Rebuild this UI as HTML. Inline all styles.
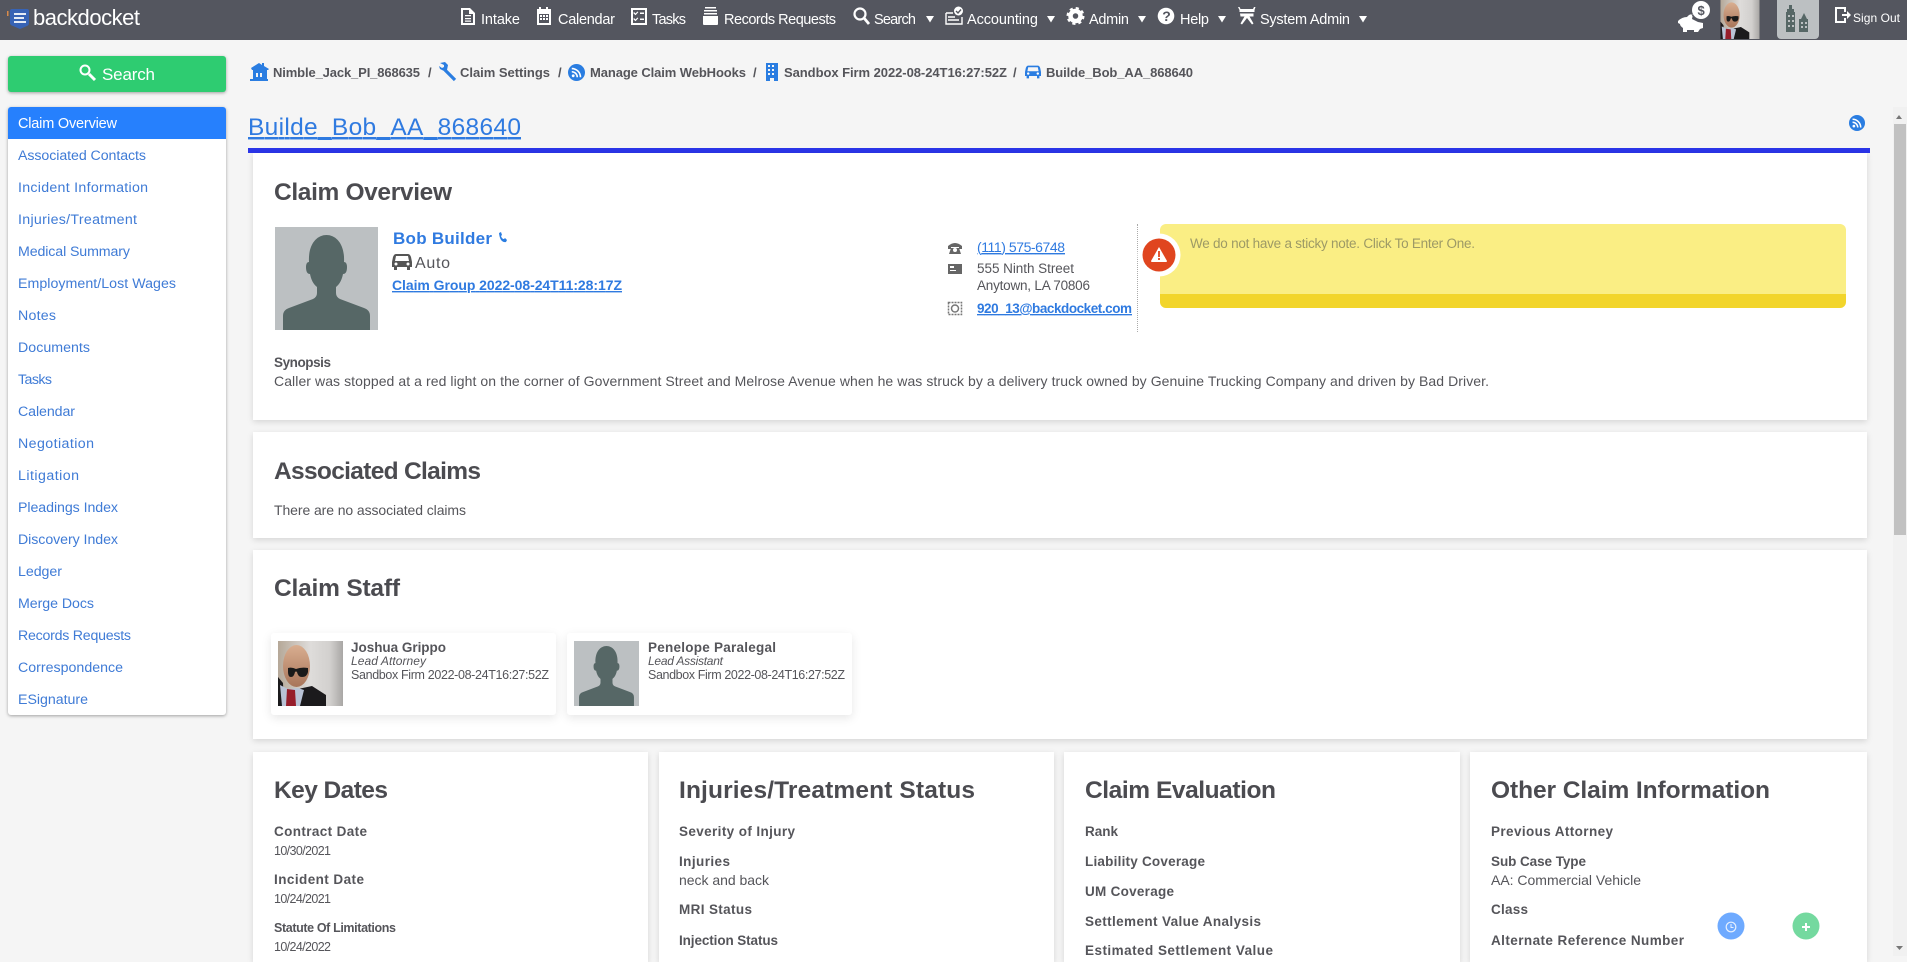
<!DOCTYPE html>
<html lang="en"><head><meta charset="utf-8"><title>Builde_Bob_AA_868640</title>
<style>
html,body{margin:0;padding:0;width:1907px;height:956px;overflow:hidden;background:#f5f5f5}
.b{position:absolute;box-sizing:border-box}
.card{background:#fff;box-shadow:0 2px 6px rgba(0,0,0,.13)}
svg#o{position:absolute;left:0;top:0}
text{font-family:"Liberation Sans",sans-serif;fill:#55555a;font-size:14px;white-space:pre}
.h{font-size:24.500px;font-weight:700;fill:#4b4b50}
.s{font-weight:700;font-size:13.500px}
.v{font-size:12.500px}
.n{fill:#fff;font-size:14.500px}
.m{fill:#3f7bd6;font-size:14.200px}
.l{fill:#2f7ae0}
.u{text-decoration:underline}
.bc{font-weight:700;font-size:13px;fill:#55555a}
.ic{fill:#fff}
</style></head><body>
<div class="b" style="left:0;top:0;width:1907px;height:40px;background:#54565f"></div>
<div class="b" style="left:1777px;top:0;width:42px;height:39px;background:#bcc0c2;border-radius:0 0 4px 4px"></div>
<div class="b" style="left:8px;top:56px;width:218px;height:36px;background:#2ecc71;border-radius:3px;box-shadow:0 1px 3px rgba(0,0,0,.35)"></div>
<div class="b" style="left:8px;top:107px;width:218px;height:608px;background:#fff;border-radius:3px;box-shadow:0 1px 3px rgba(0,0,0,.35)"></div>
<div class="b" style="left:8px;top:107px;width:218px;height:32px;background:#2680fd;border-radius:3px 3px 0 0"></div>
<div class="b" style="left:248px;top:148px;width:1622px;height:5px;background:#2b35e8"></div>
<div class="b card" style="left:253px;top:153px;width:1614px;height:267px"></div>
<div class="b card" style="left:253px;top:432px;width:1614px;height:106px"></div>
<div class="b card" style="left:253px;top:550px;width:1614px;height:189px"></div>
<div class="b card" style="left:253px;top:752px;width:395px;height:210px"></div>
<div class="b card" style="left:659px;top:752px;width:395px;height:210px"></div>
<div class="b card" style="left:1064px;top:752px;width:396px;height:210px"></div>
<div class="b card" style="left:1470px;top:752px;width:397px;height:210px"></div>
<div class="b" style="left:1160px;top:224px;width:686px;height:84px;background:#faee84;border-radius:6px;border-bottom:14px solid #f2d52b"></div>
<div class="b" style="left:1137px;top:224px;width:0;height:108px;border-left:1px dotted #aaa"></div>
<div class="b card" style="left:271px;top:633px;width:285px;height:82px;border-radius:3px;box-shadow:0 3px 10px rgba(0,0,0,.10)"></div>
<div class="b card" style="left:567px;top:633px;width:285px;height:82px;border-radius:3px;box-shadow:0 3px 10px rgba(0,0,0,.10)"></div>
<div class="b" style="left:1893px;top:107px;width:14px;height:849px;background:#f1f1f1"></div>
<div class="b" style="left:1894px;top:124px;width:12px;height:411px;background:#c1c1c1"></div>

<svg id="o" width="1907" height="956" viewBox="0 0 1907 956" xmlns="http://www.w3.org/2000/svg">
<defs>
<symbol id="sil" viewBox="0 0 103 103"><rect width="103" height="103" fill="#bcc0c2"/><path fill="#566766" d="M8 103V89q0-6 6-8l24-9q4-2 4-6v-6c-4-3-6-8-7-13-3 0-4-3-4-7 0-3 1-5 3-5-1-18 8-27 17.500-27S70 17 69 35c2 0 3 2 3 5 0 4-1 7-4 7-1 5-3 10-7 13v6q0 4 4 6l24 9q6 2 6 8v14z"/></symbol>
<linearGradient id="bgp" x1="0" x2="1" y1="0" y2="0"><stop offset="0" stop-color="#b5a898"/><stop offset=".5" stop-color="#dedcda"/><stop offset=".8" stop-color="#d2d0ce"/><stop offset="1" stop-color="#a9a7a5"/></linearGradient>
<linearGradient id="hd" x1="0" x2="0" y1="0" y2="1"><stop offset="0" stop-color="#d9ae90"/><stop offset="1" stop-color="#a8755a"/></linearGradient>
<symbol id="pho" viewBox="0 0 65 65"><rect width="65" height="65" fill="url(#bgp)"/>
<path fill="#1b1a1c" d="M0 36l5 6 1 23H0zM20 48l14-3 14 9v11H22z"/>
<path fill="#b9c3d6" d="M2 44l8 4 10-1 6 2-4 16H4z"/>
<ellipse cx="18.500" cy="25" rx="13.500" ry="21" fill="url(#hd)"/>
<path fill="#971e2b" d="M9 48l8 1 1 16H8z"/>
<path fill="#1a1a1a" d="M10 27q4-1 8 1 5-2 12-1l0 4q-1 5-6 5-4 0-5-5-1-1-2 0-1 5-4 5-3 0-3-5z"/></symbol>
<symbol id="car" viewBox="0 0 20 18"><path d="M4 1h12q2 0 3 3l1 5v5h-2v3h-3v-3H5v3H2v-3H0V9l1-5q1-3 3-3zM4 3 3 8h14l-1-5z"/><circle cx="4" cy="11" r="1.500" fill="#fff"/><circle cx="16" cy="11" r="1.500" fill="#fff"/></symbol>
<symbol id="rss" viewBox="0 0 18 18"><circle cx="9" cy="9" r="9" fill="#2a7de1"/><circle cx="5.500" cy="12.500" r="1.500" fill="#fff"/><path fill="none" stroke="#fff" stroke-width="1.700" d="M4 8.200a5.800 5.800 0 0 1 5.800 5.800M4 4.800a9.200 9.200 0 0 1 9.200 9.200"/></symbol>
</defs>

<!-- Logo -->
<rect x="7" y="11" width="1.500" height="5" fill="#d98a4a"/>
<path fill="#3763b5" d="M12 9h15q2 0 2 2v12q0 2-2 3l-7 3-7-3q-3-1-3-3V11q0-2 2-2z"/>
<path stroke="#fff" stroke-width="1.800" d="M14 14h12M14 18h10M14 22h12"/>
<text x="33" y="25" textLength="107" style="font-size:22px;fill:#fff">backdocket</text>

<!-- Nav icons -->
<g class="ic">
<path fill-rule="evenodd" d="M461 8h9l5 5v12h-14zM463 10v13h10V14h-4v-4z"/><path d="M465 15h6v1.200h-6zM465 18h6v1.200h-6zM465 20.500h6v1.200h-6z"/>
<path fill-rule="evenodd" d="M537 9h2V7h2v2h5V7h2v2h3v16h-14zM539 14v9h10v-9z"/><path d="M540 15h2v2h-2zM543 15h2v2h-2zM546 15h2v2h-2zM540 18h2v2h-2zM543 18h2v2h-2zM546 18h2v2h-2z"/>
<path fill-rule="evenodd" d="M631 8h16v17h-16zM633 10v13h12V10z"/><path d="M634 12l1.500 1.500 2-2 .8.800-2.800 3-2.200-2.200zM640 12.500h4v1.500h-4zM634 18l1.500 1.500 2-2 .8.800-2.800 3-2.200-2.200zM640 18.500h4v1.500h-4z"/>
<path d="M705 7h11v1.500h-11zM704 10h13v1.500h-13zM704 13h13v1.500h-13zM703 16h15v8q0 1-1 1h-13q-1 0-1-1z"/>
<circle cx="860" cy="14" r="5.500" fill="none" stroke="#fff" stroke-width="2.200"/><path fill="none" stroke="#fff" stroke-width="2.800" d="M864 18l5 6"/>
<path fill="none" stroke="#fff" stroke-width="1.400" d="M946 13h7M946 13v11h16v-7M948 17h7M948 20h11"/><circle cx="958.500" cy="11" r="4.500"/><path fill="none" stroke="#54565f" stroke-width="1.400" d="M956 11l2 2 3-3.500"/>
<circle cx="1075.500" cy="16" r="5" fill="none" stroke="#fff" stroke-width="4.500"/><circle cx="1075.500" cy="16" r="7.500" fill="none" stroke="#fff" stroke-width="3" stroke-dasharray="3 2.890"/>
<circle cx="1166" cy="16" r="8.300"/><text x="1162.200" y="21" style="font-size:14px;font-weight:700;fill:#54565f">?</text>
<path d="M1238 7h1.500l1 2h12.500l1-2h1.500l-1 3v2h-15v-2zM1240 13.500h13.500v3h-4l4 7-1.500 1-5-6.500-5 6.500-1.500-1 4-7h-4z"/>
</g>
<!-- Nav text -->
<text class="n" x="481" y="24" textLength="39">Intake</text>
<text class="n" x="558" y="24" textLength="57">Calendar</text>
<text class="n" x="652" y="24" textLength="34">Tasks</text>
<text class="n" x="724" y="24" textLength="112">Records Requests</text>
<text class="n" x="874" y="24" textLength="42">Search</text>
<text class="n" x="967" y="24" textLength="71">Accounting</text>
<text class="n" x="1089" y="24" textLength="40">Admin</text>
<text class="n" x="1180" y="24" textLength="29">Help</text>
<text class="n" x="1260" y="24" textLength="90">System Admin</text>
<path class="ic" d="M926 16h8l-4 6.500zM1047 16h8l-4 6.500zM1138 16h8l-4 6.500zM1218 16h8l-4 6.500zM1359 16h8l-4 6.500z"/>

<!-- Top right -->
<path class="ic" d="M1678 21q4-4 9-4 2-3 6-3l-1 5 6 3 5 1v5l-3 1-2 3v0h-4v-2h-7v2h-4v-4q-3-2-3-4l-2-1z"/>
<circle cx="1701" cy="10" r="9" fill="#fff"/><circle cx="1701" cy="10" r="10" fill="none" stroke="#54565f" stroke-width="1"/><text x="1697.500" y="15" style="font-size:13px;font-weight:700;fill:#54565f">$</text>
<use href="#pho" x="1719" y="0" width="42" height="39"/>
<g fill="#566766"><path d="M1787 9h2V5h3v4h2v3h1v20h-9V12h1zM1801 19l3-6 3 6h1v13h-9V19z"/></g>
<g fill="#bcc0c2"><path d="M1788 15h2v2h-2zM1792 15h2v2h-2zM1788 20h2v2h-2zM1792 20h2v2h-2zM1788 25h2v2h-2zM1792 25h2v2h-2zM1801 22h2v2h-2zM1805 22h2v2h-2zM1801 26h2v2h-2zM1805 26h2v2h-2z"/></g>
<path class="ic" fill-rule="evenodd" d="M1835 7h11v5h-2V9h-7v12h7v-3h2v5h-11zM1842 14h5v-3l4 4-4 4v-3h-5z"/>
<text x="1853" y="22" textLength="47" style="font-size:12px;fill:#fff">Sign Out</text>

<!-- Sidebar -->
<circle cx="85" cy="70" r="4.500" fill="none" stroke="#fff" stroke-width="2"/><path fill="none" stroke="#fff" stroke-width="3" d="M89 74l6 6"/>
<text x="102" y="80" textLength="53" style="font-size:17px;fill:#fff">Search</text>
<text class="n" x="18" y="128" textLength="99">Claim Overview</text>
<text class="m" x="18" y="160" textLength="128">Associated Contacts</text>
<text class="m" x="18" y="192" textLength="130">Incident Information</text>
<text class="m" x="18" y="224" textLength="119">Injuries/Treatment</text>
<text class="m" x="18" y="256" textLength="112">Medical Summary</text>
<text class="m" x="18" y="288" textLength="158">Employment/Lost Wages</text>
<text class="m" x="18" y="320" textLength="38">Notes</text>
<text class="m" x="18" y="352" textLength="72">Documents</text>
<text class="m" x="18" y="384" textLength="34">Tasks</text>
<text class="m" x="18" y="416" textLength="57">Calendar</text>
<text class="m" x="18" y="448" textLength="76">Negotiation</text>
<text class="m" x="18" y="480" textLength="61">Litigation</text>
<text class="m" x="18" y="512" textLength="100">Pleadings Index</text>
<text class="m" x="18" y="544" textLength="100">Discovery Index</text>
<text class="m" x="18" y="576" textLength="44">Ledger</text>
<text class="m" x="18" y="608" textLength="76">Merge Docs</text>
<text class="m" x="18" y="640" textLength="113">Records Requests</text>
<text class="m" x="18" y="672" textLength="105">Correspondence</text>
<text class="m" x="18" y="704" textLength="70">ESignature</text>

<!-- Breadcrumb -->
<g transform="translate(0,3)"><path fill="#2a7de1" d="M251 65l8-5 3 2v-2h2v3l5 3-1 1h-1v10h-14V67h-1zM256 70v4h2v-4zM260 70v4h2v-4z M250 76h18v2h-18z"/></g>
<text class="bc" x="273" y="77" textLength="147">Nimble_Jack_PI_868635</text>
<text class="bc" x="428" y="77">/</text>
<g transform="translate(0,3)"><path fill="none" stroke="#2a7de1" stroke-width="3.200" d="M445 67l10 10"/><path fill="#2a7de1" d="M440 60l5-1 3 3-1 5-3 1-4-2-1-3 3 2 2-1 0-2z"/></g>
<text class="bc" x="460" y="77" textLength="90">Claim Settings</text>
<text class="bc" x="558" y="77">/</text>
<use href="#rss" x="568" y="64" width="17" height="17"/>
<text class="bc" x="590" y="77" textLength="156">Manage Claim WebHooks</text>
<text class="bc" x="753" y="77">/</text>
<path fill="#2a7de1" fill-rule="evenodd" d="M766 63h12v18h-4v-3h-4v3h-4z"/><path fill="#f5f5f5" d="M768 65h2v2h-2zM772 65h2v2h-2zM768 69h2v2h-2zM772 69h2v2h-2zM768 73h2v2h-2zM772 73h2v2h-2z"/>
<text class="bc" x="784" y="77" textLength="223">Sandbox Firm 2022-08-24T16:27:52Z</text>
<text class="bc" x="1013" y="77">/</text>
<use href="#car" x="1025" y="64" width="16" height="16" fill="#2a7de1"/>
<text class="bc" x="1046" y="77" textLength="147">Builde_Bob_AA_868640</text>

<!-- Title -->
<text class="l u" x="248" y="135" textLength="273" style="font-size:24.500px">Builde_Bob_AA_868640</text>
<use href="#rss" x="1849" y="115" width="16" height="16"/>

<!-- Claim Overview -->
<text class="h" x="274" y="200" textLength="178">Claim Overview</text>
<use href="#sil" x="275" y="227" width="103" height="103"/>
<text class="l" x="393" y="244" textLength="99" style="font-size:17px;font-weight:700">Bob Builder</text>
<path fill="#2a7de1" d="M499 233l2-1 1 3-1 1q1 3 3 3l1-1 2 2-1 2q-6 1-7-9z"/>
<use href="#car" x="392" y="253" width="20" height="18" fill="#555"/>
<text x="415" y="268" textLength="35" style="font-size:16px">Auto</text>
<text class="l u" x="392" y="290" textLength="230" style="font-weight:700;font-size:14px">Claim Group 2022-08-24T11:28:17Z</text>
<text class="s" x="274" y="367" textLength="57">Synopsis</text>
<text x="274" y="386" textLength="1215">Caller was stopped at a red light on the corner of Government Street and Melrose Avenue when he was struck by a delivery truck owned by Genuine Trucking Company and driven by Bad Driver.</text>

<path fill="#666" d="M948 246q7-6 14 0v3h-3v-2h-8v2h-3zM951 248h8l2 6h-12z"/><circle cx="955" cy="250" r="2" fill="#fff"/>
<text class="l u" x="977" y="252" textLength="88">(111) 575-6748</text>
<path fill="#666" fill-rule="evenodd" d="M948 264h14v10h-14zM950 266v2h4v-2zM950 270v1h6v-1z"/>
<text x="977" y="273" textLength="97" style="font-size:13.500px">555 Ninth Street</text>
<text x="977" y="290" textLength="113" style="font-size:13.500px">Anytown, LA 70806</text>
<rect x="948.500" y="302.500" width="13" height="12" fill="none" stroke="#777" stroke-width="1.500" stroke-dasharray="2 1"/><circle cx="955" cy="308.500" r="3.500" fill="none" stroke="#777" stroke-width="1.500"/>
<text class="l u" x="977" y="313" textLength="155" style="font-weight:700;font-size:13.500px">920_13@backdocket.com</text>

<text x="1190" y="248" textLength="285" style="font-size:13.500px;fill:#9d9a66">We do not have a sticky note. Click To Enter One.</text>
<circle cx="1159" cy="255" r="21.500" fill="#fff"/><circle cx="1159" cy="255" r="16.500" fill="#e0451f"/>
<path fill="#fff" d="M1159 247l8 14q0 1-1 1h-14q-1 0-1-1z"/><path stroke="#e0451f" stroke-width="1.800" d="M1159 251v6M1159 258v2"/>

<!-- Associated Claims -->
<text class="h" x="274" y="479" textLength="207">Associated Claims</text>
<text x="274" y="515" textLength="192">There are no associated claims</text>

<!-- Staff -->
<text class="h" x="274" y="596" textLength="126">Claim Staff</text>
<use href="#pho" x="278" y="641" width="65" height="65"/>
<text class="s" x="351" y="652" textLength="95">Joshua Grippo</text>
<text x="351" y="665" textLength="75" style="font-size:12px;font-style:italic">Lead Attorney</text>
<text x="351" y="679" textLength="198" style="font-size:12.500px">Sandbox Firm 2022-08-24T16:27:52Z</text>
<use href="#sil" x="574" y="641" width="65" height="65"/>
<text class="s" x="648" y="652" textLength="128">Penelope Paralegal</text>
<text x="648" y="665" textLength="75" style="font-size:12px;font-style:italic">Lead Assistant</text>
<text x="648" y="679" textLength="197" style="font-size:12.500px">Sandbox Firm 2022-08-24T16:27:52Z</text>

<!-- Row 4 -->
<text class="h" x="274" y="798" textLength="114">Key Dates</text>
<text class="s" x="274" y="836" textLength="93">Contract Date</text>
<text class="v" x="274" y="855" textLength="57">10/30/2021</text>
<text class="s" x="274" y="884" textLength="90">Incident Date</text>
<text class="v" x="274" y="903" textLength="57">10/24/2021</text>
<text class="s" x="274" y="932" textLength="122" style="font-size:12.500px">Statute Of Limitations</text>
<text class="v" x="274" y="951" textLength="57">10/24/2022</text>

<text class="h" x="679" y="798" textLength="296">Injuries/Treatment Status</text>
<text class="s" x="679" y="836" textLength="116">Severity of Injury</text>
<text class="s" x="679" y="866" textLength="51">Injuries</text>
<text x="679" y="885" textLength="90">neck and back</text>
<text class="s" x="679" y="914" textLength="73">MRI Status</text>
<text class="s" x="679" y="945" textLength="99">Injection Status</text>

<text class="h" x="1085" y="798" textLength="191">Claim Evaluation</text>
<text class="s" x="1085" y="836" textLength="33">Rank</text>
<text class="s" x="1085" y="866" textLength="120">Liability Coverage</text>
<text class="s" x="1085" y="896" textLength="89">UM Coverage</text>
<text class="s" x="1085" y="926" textLength="176">Settlement Value Analysis</text>
<text class="s" x="1085" y="955" textLength="188">Estimated Settlement Value</text>

<text class="h" x="1491" y="798" textLength="279">Other Claim Information</text>
<text class="s" x="1491" y="836" textLength="122">Previous Attorney</text>
<text class="s" x="1491" y="866" textLength="95">Sub Case Type</text>
<text x="1491" y="885" textLength="150">AA: Commercial Vehicle</text>
<text class="s" x="1491" y="914" textLength="37">Class</text>
<text class="s" x="1491" y="945" textLength="193">Alternate Reference Number</text>

<!-- Float buttons -->
<circle cx="1731" cy="926" r="13.500" fill="#6eaaff"/>
<circle cx="1731" cy="927" r="4.800" fill="none" stroke="#e6f0ff" stroke-width="1.200"/><path fill="none" stroke="#e6f0ff" d="M1731 924v3.500h2.500"/>
<circle cx="1806" cy="926" r="13.500" fill="#74d99f"/>
<path stroke="#fff" stroke-width="2" d="M1802 927h8M1806 923v8"/>

<!-- Scroll arrows -->
<path fill="#777" d="M1896 119l3-4 3 4zM1896 946h7l-3.500 4z"/>
</svg>
</body></html>
